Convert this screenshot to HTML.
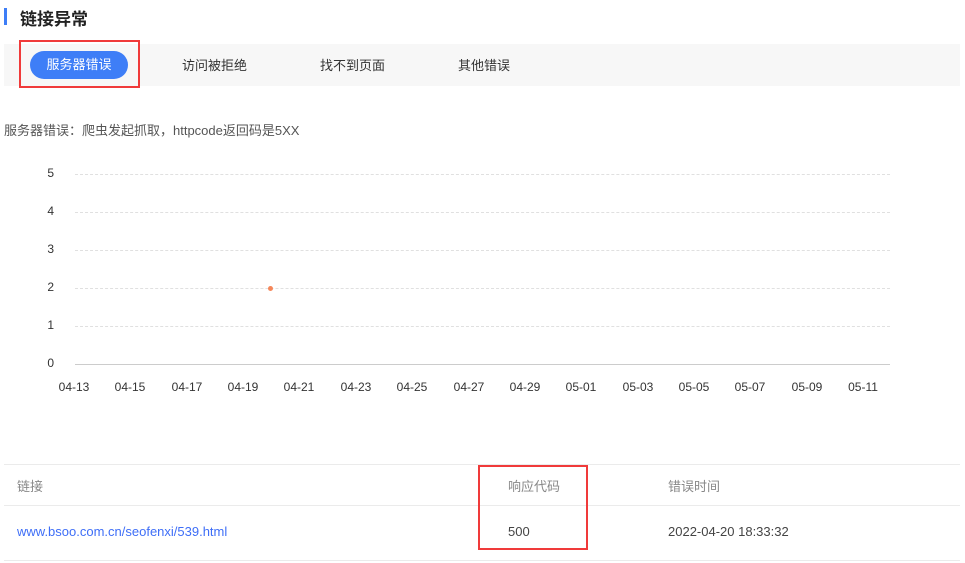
<!DOCTYPE html>
<html><head><meta charset="utf-8"><style>
*{margin:0;padding:0;box-sizing:border-box}
body{width:965px;height:563px;background:#fff;font-family:"Liberation Sans","Noto Sans CJK SC",sans-serif;position:relative;overflow:hidden;color:#333}
.a{position:absolute;white-space:nowrap}
.grid{position:absolute;left:75px;width:815px;border-top:1px dashed #e0e0e0}
.yl{position:absolute;left:40px;width:14px;text-align:right;font-size:12px;color:#333}
.xl{position:absolute;top:380px;font-size:12px;color:#333;width:40px;text-align:center}
</style></head><body>
<div class="a" style="left:4px;top:8px;width:3px;height:17px;background:#3e7ef7"></div>
<div class="a" style="left:20px;top:5px;font-size:17px;font-weight:bold;color:#222">链接异常</div>
<div class="a" style="left:4px;top:44px;width:956px;height:42px;background:#f7f7f7"></div>
<div class="a" style="left:30px;top:51px;width:98px;height:28px;border-radius:14px;background:#3e7ef7;color:#fff;font-size:13px;line-height:28px;text-align:center">服务器错误</div>
<div class="a" style="left:19px;top:40px;width:121px;height:48px;border:2px solid #f03a3a"></div>
<div class="a" style="left:182px;top:55px;font-size:13px">访问被拒绝</div>
<div class="a" style="left:320px;top:55px;font-size:13px">找不到页面</div>
<div class="a" style="left:458px;top:55px;font-size:13px">其他错误</div>
<div class="a" style="left:4px;top:120px;font-size:13px;color:#555">服务器错误：爬虫发起抓取，httpcode返回码是5XX</div>
<div class="grid" style="top:174px"></div><div class="grid" style="top:212px"></div><div class="grid" style="top:250px"></div><div class="grid" style="top:288px"></div><div class="grid" style="top:326px"></div>
<div class="a" style="left:75px;top:364px;width:815px;height:1px;background:#ccc"></div>
<div class="yl" style="top:166px">5</div><div class="yl" style="top:204px">4</div><div class="yl" style="top:242px">3</div><div class="yl" style="top:280px">2</div><div class="yl" style="top:318px">1</div><div class="yl" style="top:356px">0</div>
<div class="a" style="left:268px;top:286px;width:5px;height:5px;border-radius:50%;background:#f5875a"></div>
<div class="xl" style="left:54px">04-13</div><div class="xl" style="left:110px">04-15</div><div class="xl" style="left:167px">04-17</div><div class="xl" style="left:223px">04-19</div><div class="xl" style="left:279px">04-21</div><div class="xl" style="left:336px">04-23</div><div class="xl" style="left:392px">04-25</div><div class="xl" style="left:449px">04-27</div><div class="xl" style="left:505px">04-29</div><div class="xl" style="left:561px">05-01</div><div class="xl" style="left:618px">05-03</div><div class="xl" style="left:674px">05-05</div><div class="xl" style="left:730px">05-07</div><div class="xl" style="left:787px">05-09</div><div class="xl" style="left:843px">05-11</div>
<div class="a" style="left:4px;top:464px;width:956px;height:1px;background:#ebebeb"></div>
<div class="a" style="left:4px;top:505px;width:956px;height:1px;background:#ebebeb"></div>
<div class="a" style="left:4px;top:560px;width:956px;height:1px;background:#ebebeb"></div>
<div class="a" style="left:17px;top:476px;font-size:13px;color:#888">链接</div>
<div class="a" style="left:508px;top:476px;font-size:13px;color:#888">响应代码</div>
<div class="a" style="left:668px;top:476px;font-size:13px;color:#888">错误时间</div>
<div class="a" style="left:17px;top:524px;font-size:13px;color:#3e6ef7">www.bsoo.com.cn/seofenxi/539.html</div>
<div class="a" style="left:508px;top:524px;font-size:13px;color:#444">500</div>
<div class="a" style="left:668px;top:524px;font-size:13px;color:#444">2022-04-20 18:33:32</div>
<div class="a" style="left:478px;top:465px;width:110px;height:85px;border:2px solid #f03a3a"></div>
</body></html>
